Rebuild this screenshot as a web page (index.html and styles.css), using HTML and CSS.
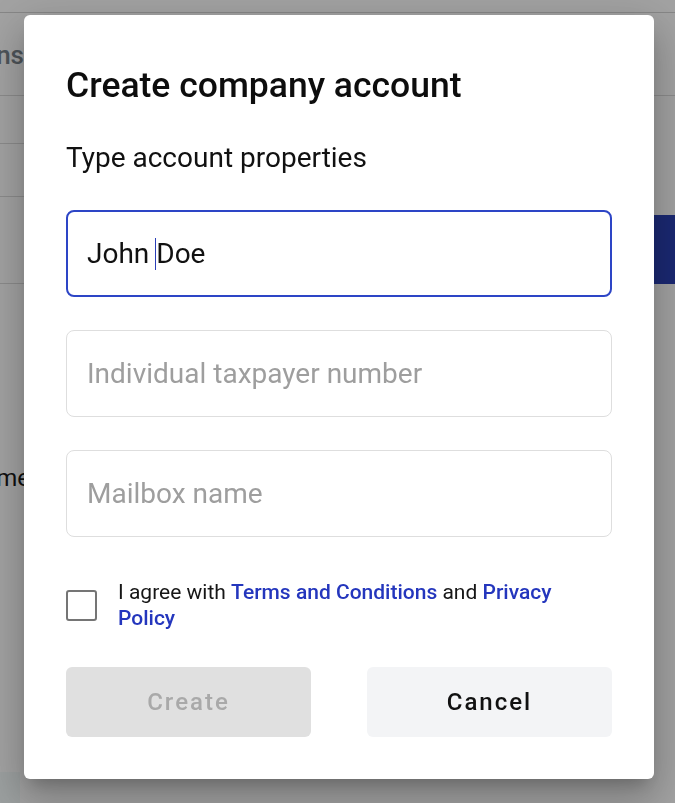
FILE: index.html
```html
<!DOCTYPE html>
<html lang="en">
<head>
<meta charset="utf-8">
<title>Create company account</title>
<link rel="stylesheet" href="styles.css">
</head>
<body>
<div class="page">
  <div class="topbar"></div>
  <div class="tabs">
    <div class="tab-cell"><span class="tab-label">Transactions</span></div>
  </div>
  <div class="main">
    <div class="list">
      <div class="list-row r1"></div>
      <div class="list-row r2"></div>
      <div class="list-row r3"></div>
      <div class="field-cell"><span class="field-label">Name</span></div>
    </div>
    <div class="side">
      <div class="side-button"></div>
    </div>
  </div>
  <div class="footer-box"></div>
</div>

<div class="overlay"></div>

<div class="dialog" role="dialog" aria-labelledby="dlg-title">
  <h1 class="dialog-title" id="dlg-title">Create company account</h1>
  <p class="dialog-subtitle">Type account properties</p>

  <div class="field field-focused">
    <span class="field-value">John </span><span class="caret"></span><span class="field-value">Doe</span>
  </div>
  <div class="field">
    <span class="field-placeholder">Individual taxpayer number</span>
  </div>
  <div class="field">
    <span class="field-placeholder">Mailbox name</span>
  </div>

  <label class="agree">
    <span class="checkbox"></span>
    <span class="agree-text">I agree with <a class="link" href="#">Terms and Conditions</a> and <a class="link" href="#">Privacy Policy</a></span>
  </label>

  <div class="actions">
    <button class="btn btn-create" disabled>Create</button>
    <button class="btn btn-cancel">Cancel</button>
  </div>
</div>
</body>
</html>
```

FILE: styles.css
```css
* { box-sizing: border-box; }

html, body {
  margin: 0;
  padding: 0;
  height: 100%;
}

body {
  font-family: Roboto, "Liberation Sans", Arial, sans-serif;
  background: #ffffff;
  color: #111;
  overflow: hidden;
}

/* ---------- underlying page ---------- */
.page {
  height: 803px;
  display: flex;
  flex-direction: column;
}

.topbar {
  height: 13px;
  border-bottom: 1px solid #d4d4d4;
  flex: none;
}

.tabs {
  height: 83px;
  border-bottom: 1px solid #dcdcdc;
  flex: none;
  display: flex;
  align-items: flex-start;
  padding-top: 27px;
}

.tab-cell {
  width: 24px;
  overflow: hidden;
  display: flex;
  justify-content: flex-end;
}

.tab-label {
  font-size: 26px;
  font-weight: 500;
  color: #7a848b;
  white-space: nowrap;
  line-height: 30px;
}

.main {
  flex: 1;
  display: flex;
}

.list {
  width: 300px;
  display: flex;
  flex-direction: column;
}

.list-row {
  border-bottom: 1px solid #dcdcdc;
  flex: none;
}
.r1 { height: 48px; }
.r2 { height: 53px; }
.r3 { height: 87px; }

.field-cell {
  margin-top: 180px;
  width: 30px;
  overflow: hidden;
  display: flex;
  justify-content: flex-end;
}

.field-label {
  font-size: 24px;
  color: #1a1a1a;
  white-space: nowrap;
  line-height: 28px;
}

.side {
  flex: 1;
  display: flex;
  justify-content: flex-end;
  align-items: flex-start;
  padding-top: 119px;
}

.side-button {
  width: 60px;
  height: 69px;
  background: #2b41b4;
}

.footer-box {
  height: 31px;
  width: 20px;
  background: #f4fafa;
  flex: none;
}

.overlay {
  position: fixed;
  inset: 0;
  background: rgba(0, 0, 0, 0.36);
}

/* ---------- dialog ---------- */
.dialog {
  position: absolute;
  left: 24px;
  top: 15px;
  width: 630px;
  height: 764px;
  background: #ffffff;
  border-radius: 6px;
  padding: 50px 42px 42px;
  display: flex;
  flex-direction: column;
  box-shadow:
    0 11px 15px -7px rgba(0, 0, 0, 0.2),
    0 24px 38px 3px rgba(0, 0, 0, 0.14),
    0 9px 46px 8px rgba(0, 0, 0, 0.12);
}

.dialog-title {
  margin: 0;
  font-size: 35.5px;
  line-height: 40px;
  font-weight: 500;
  color: #0d0d0d;
}

.dialog-subtitle {
  margin: 37px 0 0;
  font-size: 28px;
  line-height: 32px;
  font-weight: 400;
  color: #111;
}

.field {
  height: 87px;
  border: 1px solid #dedede;
  border-radius: 8px;
  display: flex;
  align-items: center;
  padding: 0 20px;
  margin-top: 33px;
  font-size: 28px;
  white-space: pre;
}

.field-focused {
  margin-top: 36px;
  border: 2px solid #2d45c6;
  padding: 0 19px;
}

.field-value {
  color: #111;
}

.caret {
  display: inline-block;
  width: 1px;
  height: 32px;
  background: #2b3fb8;
  margin-left: -1px;
}

.field-placeholder {
  color: #9e9e9e;
}

.agree {
  margin-top: 42px;
  display: flex;
  align-items: center;
  gap: 21px;
  cursor: pointer;
}

.checkbox {
  width: 31px;
  height: 31px;
  flex: none;
  border: 2.5px solid #757575;
  border-radius: 3px;
}

.agree-text {
  max-width: 470px;
  font-size: 21px;
  line-height: 26px;
  color: #161616;
}

.link {
  color: #2436bd;
  font-weight: 500;
  text-decoration: none;
}

.actions {
  margin-top: 36px;
  display: grid;
  grid-template-columns: 1fr 1fr;
  gap: 56px;
}

.btn {
  height: 70px;
  border: none;
  border-radius: 6px;
  font-family: inherit;
  font-size: 24px;
  font-weight: 500;
  letter-spacing: 2px;
  cursor: pointer;
}

.btn-create {
  background: #e0e0e0;
  color: #a9a9a9;
  cursor: default;
}

.btn-cancel {
  background: #f3f4f6;
  color: #111;
}
```
